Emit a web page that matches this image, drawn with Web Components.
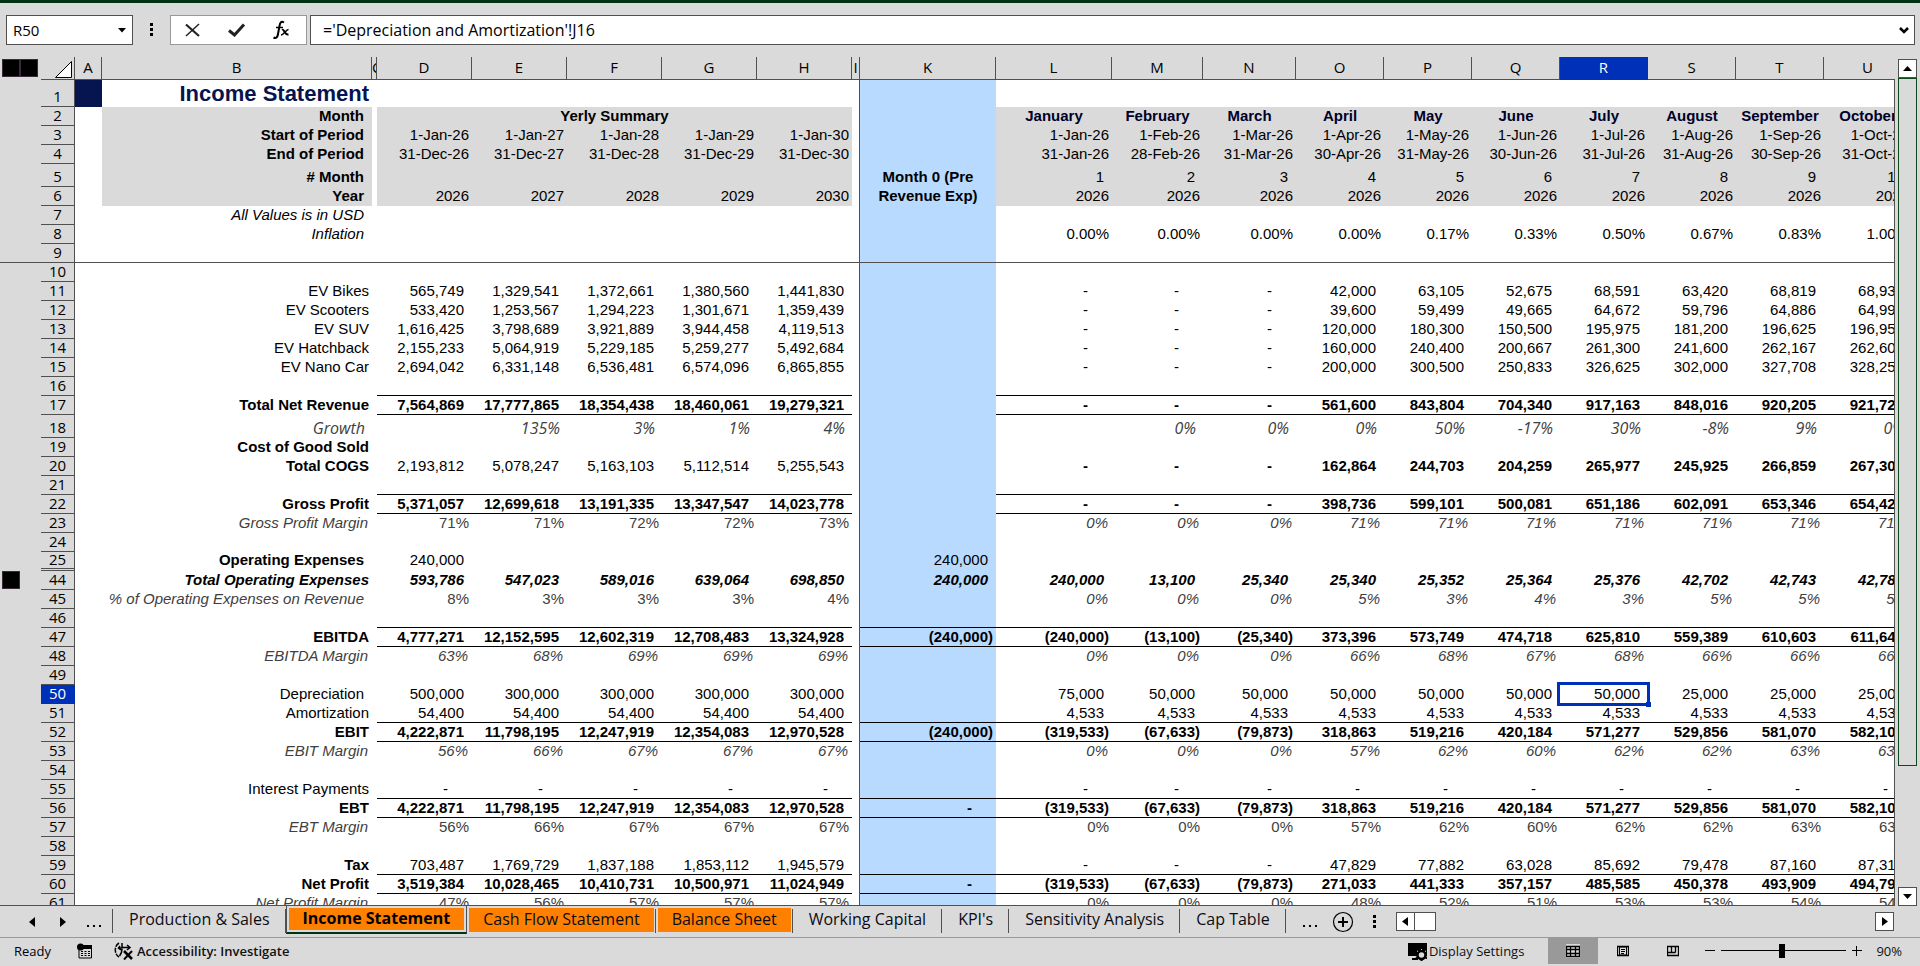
<!DOCTYPE html>
<html lang="en">
<head>
<meta charset="utf-8">
<title>Income Statement</title>
<style>
    body {
        margin: 0;
        background: #dadada;
    }
</style>
</head>
<body>
<workbook-app>
    <formula-bar slot="formula" cell="R50" formula="='Depreciation and Amortization'!J16"></formula-bar>
    <sheet-grid slot="sheet"></sheet-grid>
    <sheet-scrollbar slot="scroll"></sheet-scrollbar>
    <sheet-tabs slot="tabs">
        <sheet-tab>Production &amp; Sales</sheet-tab>
        <sheet-tab filled active>Income Statement</sheet-tab>
        <sheet-tab filled>Cash Flow Statement</sheet-tab>
        <sheet-tab filled>Balance Sheet</sheet-tab>
        <sheet-tab>Working Capital</sheet-tab>
        <sheet-tab>KPI's</sheet-tab>
        <sheet-tab>Sensitivity Analysis</sheet-tab>
        <sheet-tab>Cap Table</sheet-tab>
    </sheet-tabs>
    <status-bar slot="status" zoom="90">Ready</status-bar>
</workbook-app>

<script>
// Attach an open shadow root filled from a template
function attach(el, html) {
    const template = document.createElement('template');
    template.innerHTML = html;
    el.attachShadow({ mode: 'open' });
    el.shadowRoot.appendChild(template.content.cloneNode(true));
}

class WorkbookApp extends HTMLElement {
    constructor() {
        super();
        attach(this, `
            <style>
                :host {
                    display: grid;
                    grid-template-columns: minmax(0, 1fr) auto;
                    grid-template-rows: auto minmax(0, 1fr) auto auto;
                    height: 100vh;
                    box-sizing: border-box;
                    border-top: 3px solid #003311;
                    background: #dadada;
                    color: #000;
                    font-family: "Open Sans", "Noto Sans", sans-serif;
                    font-size: 15px;
                    overflow: hidden;
                    --line: #505050;
                    --accent: #0030b8;
                }
                .wide {
                    grid-column: 1 / -1;
                    min-width: 0;
                }
            </style>
            <div class="wide"><slot name="formula"></slot></div>
            <slot name="sheet"></slot>
            <slot name="scroll"></slot>
            <div class="wide"><slot name="tabs"></slot></div>
            <div class="wide"><slot name="status"></slot></div>
        `);
    }
}

class FormulaBar extends HTMLElement {
    constructor() {
        super();
        attach(this, `
            <style>
                :host {
                    display: flex;
                    padding: 12px 5px 12px 6px;
                }
                .box {
                    display: flex;
                    box-sizing: border-box;
                    height: 30px;
                    background: #fff;
                    border: 1px solid var(--line);
                }
                input {
                    flex: 1;
                    min-width: 0;
                    border: 0;
                    padding: 0;
                    background: none;
                    color: #000;
                    font: inherit;
                    outline: none;
                }
                button {
                    display: grid;
                    place-items: center;
                    border: 0;
                    padding: 0;
                    background: none;
                }
                .name {
                    width: 127px;
                    padding-left: 6px;
                }
                .name button {
                    width: 20px;
                }
                .dots {
                    width: 37px;
                    display: grid;
                    place-items: center;
                }
                .tools {
                    width: 137px;
                    border-color: #999;
                    justify-content: space-around;
                    padding: 0 3px 0 0;
                }
                .tools button {
                    width: 44px;
                }
                .formula {
                    flex: 1;
                    margin-left: 3px;
                    padding-left: 12px;
                    font-size: 16px;
                }
                .formula button {
                    width: 20px;
                }
            </style>
            <div class="box name">
                <input id="cell" aria-label="Name Box">
                <button aria-label="Open Name Box"><svg width="8" height="5"><path d="M0 0h8L4 4.500z"/></svg></button>
            </div>
            <div class="dots"><svg width="3" height="14"><path d="M0 0h3v3H0zM0 5h3v3H0zM0 10h3v3H0z"/></svg></div>
            <div class="box tools">
                <button aria-label="Cancel">
                    <svg width="16" height="14" fill="none" stroke="#222"><path d="M1 1.500L14 13" stroke-width="2.200"/><path d="M14 1L1 13" stroke-width="1.500"/></svg>
                </button>
                <button aria-label="Enter">
                    <svg width="18" height="14" fill="none" stroke="#222" stroke-width="3"><path d="M1 7.500L6.500 12L16 1.500"/></svg>
                </button>
                <button aria-label="Insert Function">
                    <svg width="18" height="20" fill="none" stroke="#000"><path d="M12 2.500C9 0.500 8 3 7.500 6L6 14C5.500 17.500 4 18.800 1.500 17.500" stroke-width="2"/><path d="M4 7.500h7" stroke-width="1.500"/><path d="M10 10C12.500 8.500 12.500 15.500 16.500 14.500" stroke-width="2"/><path d="M16.500 9.500C14 9.500 12 15 9 15" stroke-width="1.500"/></svg>
                </button>
            </div>
            <div class="box formula">
                <input id="formula" aria-label="Formula Bar">
                <button aria-label="Expand Formula Bar"><svg width="10" height="7" fill="none" stroke="#000" stroke-width="2.500"><path d="M1 1L5 5L9 1"/></svg></button>
            </div>
        `);
    }

    connectedCallback() {
        this.shadowRoot.querySelector('#cell').value = this.getAttribute('cell');
        this.shadowRoot.querySelector('#formula').value = this.getAttribute('formula');
    }
}

const COLUMNS = [
    ['A', 27], ['B', 270], ['C', 5],
    ['D', 95], ['E', 95], ['F', 95], ['G', 95], ['H', 95], ['I', 8],
    ['K', 136], ['L', 116], ['M', 91], ['N', 93],
    ['O', 88], ['P', 88], ['Q', 88], ['R', 88], ['S', 88], ['T', 88], ['U', 88]
];
const YEAR_COLUMNS = ['D', 'E', 'F', 'G', 'H'];
const MONTH_COLUMNS = ['L', 'M', 'N', 'O', 'P', 'Q', 'R', 'S', 'T', 'U'];

// n: row number, label: column B, l: label class, y: years, m: months, k: column K
// yc/mc/kc: classes, line: first monthly column that the bottom rule covers
const ROWS = [
    { n: 1, label: 'Income Statement', l: 'title', size: 'first' },
    { n: 2, label: 'Month', l: 'b in', head: 1, m: 'January February March April May June July August September October', mc: 'b month' },
    { n: 3, label: 'Start of Period', l: 'b in', head: 1, y: '1-Jan-26 1-Jan-27 1-Jan-28 1-Jan-29 1-Jan-30',
      m: '1-Jan-26 1-Feb-26 1-Mar-26 1-Apr-26 1-May-26 1-Jun-26 1-Jul-26 1-Aug-26 1-Sep-26 1-Oct-26' },
    { n: 4, label: 'End of Period', l: 'b in', head: 1, y: '31-Dec-26 31-Dec-27 31-Dec-28 31-Dec-29 31-Dec-30',
      m: '31-Jan-26 28-Feb-26 31-Mar-26 30-Apr-26 31-May-26 30-Jun-26 31-Jul-26 31-Aug-26 30-Sep-26 31-Oct-26' },
    { n: 5, label: '# Month', l: 'b in', head: 1, size: 'tall', m: '1 2 3 4 5 6 7 8 9 10', mc: 'in' },
    { n: 6, label: 'Year', l: 'b in', head: 1, y: '2026 2027 2028 2029 2030', m: '2026 2026 2026 2026 2026 2026 2026 2026 2026 2026' },
    { n: 7, label: 'All Values is in USD', l: 'i in' },
    { n: 8, label: 'Inflation', l: 'i in', m: '0.00% 0.00% 0.00% 0.00% 0.17% 0.33% 0.50% 0.67% 0.83% 1.00%' },
    { n: 9, freeze: 1 },
    { n: 10 },
    { n: 11, label: 'EV Bikes', y: '565,749 1,329,541 1,372,661 1,380,560 1,441,830', yc: 'in',
      m: '- - - 42,000 63,105 52,675 68,591 63,420 68,819 68,934', mc: 'in' },
    { n: 12, label: 'EV Scooters', y: '533,420 1,253,567 1,294,223 1,301,671 1,359,439', yc: 'in',
      m: '- - - 39,600 59,499 49,665 64,672 59,796 64,886 64,995', mc: 'in' },
    { n: 13, label: 'EV SUV', y: '1,616,425 3,798,689 3,921,889 3,944,458 4,119,513', yc: 'in',
      m: '- - - 120,000 180,300 150,500 195,975 181,200 196,625 196,953', mc: 'in' },
    { n: 14, label: 'EV Hatchback', y: '2,155,233 5,064,919 5,229,185 5,259,277 5,492,684', yc: 'in',
      m: '- - - 160,000 240,400 200,667 261,300 241,600 262,167 262,604', mc: 'in' },
    { n: 15, label: 'EV Nano Car', y: '2,694,042 6,331,148 6,536,481 6,574,096 6,865,855', yc: 'in',
      m: '- - - 200,000 300,500 250,833 326,625 302,000 327,708 328,255', mc: 'in' },
    { n: 16, line: 'L' },
    { n: 17, label: 'Total Net Revenue', l: 'b', y: '7,564,869 17,777,865 18,354,438 18,460,061 19,279,321', yc: 'b in',
      m: '- - - 561,600 843,804 704,340 917,163 848,016 920,205 921,725', mc: 'b in', line: 'L' },
    { n: 18, label: 'Growth', l: 'growth', size: 'tall', y: '_ 135% 3% 1% 4%', yc: 'growth', m: '_ 0% 0% 0% 50% -17% 30% -8% 9% 0%', mc: 'growth' },
    { n: 19, label: 'Cost of Good Sold', l: 'b' },
    { n: 20, label: 'Total COGS', l: 'b', y: '2,193,812 5,078,247 5,163,103 5,112,514 5,255,543', yc: 'in',
      m: '- - - 162,864 244,703 204,259 265,977 245,925 266,859 267,300', mc: 'b in' },
    { n: 21, line: 'L' },
    { n: 22, label: 'Gross Profit', l: 'b', y: '5,371,057 12,699,618 13,191,335 13,347,547 14,023,778', yc: 'b in',
      m: '- - - 398,736 599,101 500,081 651,186 602,091 653,346 654,425', mc: 'b in', line: 'L' },
    { n: 23, label: 'Gross Profit Margin', l: 'i dim', y: '71% 71% 72% 72% 73%', yc: 'dim',
      m: '0% 0% 0% 71% 71% 71% 71% 71% 71% 71%', mc: 'i dim' },
    { n: 24 },
    { n: 25, label: 'Operating Expenses', l: 'b in', y: '240,000', yc: 'in', k: '240,000', kc: 'in', size: 'short' },
    { gap: 1 },
    { n: 44, label: 'Total Operating Expenses', l: 'b i', y: '593,786 547,023 589,016 639,064 698,850', yc: 'b i in', k: '240,000', kc: 'b i in',
      m: '240,000 13,100 25,340 25,340 25,352 25,364 25,376 42,702 42,743 42,784', mc: 'b i in', outline: 1 },
    { n: 45, label: '% of Operating Expenses on Revenue', l: 'i dim in', y: '8% 3% 3% 3% 4%', yc: 'dim',
      m: '0% 0% 0% 5% 3% 4% 3% 5% 5% 5%', mc: 'i dim' },
    { n: 46, line: 'K' },
    { n: 47, label: 'EBITDA', l: 'b', y: '4,777,271 12,152,595 12,602,319 12,708,483 13,324,928', yc: 'b in', k: '(240,000)', kc: 'b in',
      m: '(240,000) (13,100) (25,340) 373,396 573,749 474,718 625,810 559,389 610,603 611,641', mc: 'b in', line: 'K' },
    { n: 48, label: 'EBITDA Margin', l: 'i dim', y: '63% 68% 69% 69% 69%', yc: 'i dim',
      m: '0% 0% 0% 66% 68% 67% 68% 66% 66% 66%', mc: 'i dim' },
    { n: 49 },
    { n: 50, label: 'Depreciation', l: 'in', y: '500,000 300,000 300,000 300,000 300,000', yc: 'in',
      m: '75,000 50,000 50,000 50,000 50,000 50,000 50,000 25,000 25,000 25,000', mc: 'in' },
    { n: 51, label: 'Amortization', y: '54,400 54,400 54,400 54,400 54,400', yc: 'in',
      m: '4,533 4,533 4,533 4,533 4,533 4,533 4,533 4,533 4,533 4,533', mc: 'in', line: 'K' },
    { n: 52, label: 'EBIT', l: 'b', y: '4,222,871 11,798,195 12,247,919 12,354,083 12,970,528', yc: 'b in', k: '(240,000)', kc: 'b in',
      m: '(319,533) (67,633) (79,873) 318,863 519,216 420,184 571,277 529,856 581,070 582,108', mc: 'b in', line: 'K' },
    { n: 53, label: 'EBIT Margin', l: 'i dim', y: '56% 66% 67% 67% 67%', yc: 'i dim',
      m: '0% 0% 0% 57% 62% 60% 62% 62% 63% 63%', mc: 'i dim' },
    { n: 54 },
    { n: 55, label: 'Interest Payments', y: '- - - - -', yc: 'in', m: '- - - - - - - - - -', mc: 'in', line: 'K' },
    { n: 56, label: 'EBT', l: 'b', y: '4,222,871 11,798,195 12,247,919 12,354,083 12,970,528', yc: 'b in', k: '-', kc: 'b in',
      m: '(319,533) (67,633) (79,873) 318,863 519,216 420,184 571,277 529,856 581,070 582,108', mc: 'b in', line: 'K' },
    { n: 57, label: 'EBT Margin', l: 'i dim', y: '56% 66% 67% 67% 67%', yc: 'dim',
      m: '0% 0% 0% 57% 62% 60% 62% 62% 63% 63%', mc: 'dim' },
    { n: 58 },
    { n: 59, label: 'Tax', l: 'b', y: '703,487 1,769,729 1,837,188 1,853,112 1,945,579', yc: 'in',
      m: '- - - 47,829 77,882 63,028 85,692 79,478 87,160 87,316', mc: 'in', line: 'K' },
    { n: 60, label: 'Net Profit', l: 'b', y: '3,519,384 10,028,465 10,410,731 10,500,971 11,024,949', yc: 'b in', k: '-', kc: 'b in',
      m: '(319,533) (67,633) (79,873) 271,033 441,333 357,157 485,585 450,378 493,909 494,792', mc: 'b in', line: 'K' },
    { n: 61, label: 'Net Profit Margin', l: 'i dim', y: '47% 56% 57% 57% 57%', yc: 'dim',
      m: '0% 0% 0% 48% 52% 51% 53% 53% 54% 54%', mc: 'dim' }
];

class SheetGrid extends HTMLElement {
    constructor() {
        super();
        attach(this, `
            <style>
                :host {
                    display: block;
                    overflow: hidden;
                    background: #fff;
                    border-bottom: 1px solid var(--line);
                }
                table {
                    table-layout: fixed;
                    width: 0;
                    border-collapse: separate;
                    border-spacing: 0;
                    font: 15px/18px "Liberation Sans", Arial, sans-serif;
                }
                th, td {
                    box-sizing: border-box;
                    height: 19px;
                    padding: 0 3px 0 0;
                    border-bottom: 1px solid transparent;
                    text-align: right;
                    vertical-align: bottom;
                    white-space: nowrap;
                    font-weight: normal;
                }
                .first > * { height: 27px; }
                .tall > * { height: 23px; }
                .short > * { height: 17px; line-height: 16px; }
                .gap > * { height: 2px; line-height: 1px; }

                /* column letters */
                thead th {
                    height: 23px;
                    padding: 0;
                    overflow: hidden;
                    background: #dadada;
                    border-right: 1px solid var(--line);
                    border-bottom-color: var(--line);
                    font: 15px/20px "Open Sans", "Noto Sans", sans-serif;
                    text-align: center;
                    vertical-align: top;
                }
                thead th.gutter {
                    border-color: #dadada;
                }
                th.sel {
                    background: var(--accent);
                    color: #fff;
                    border-color: var(--accent);
                }
                thead button {
                    display: block;
                    float: right;
                    margin: 4px 2px 0 0;
                    border: 0;
                    padding: 0;
                    background: none;
                    line-height: 0;
                }
                thead .outline {
                    padding-top: 2px;
                }

                /* outline gutter and row numbers */
                .gutter {
                    background: #dadada;
                    padding: 0;
                }
                .outline {
                    display: flex;
                    padding-left: 2px;
                }
                .outline button {
                    box-sizing: border-box;
                    width: 18px;
                    height: 18px;
                    margin: 0;
                    border: 1px solid #3a2a3c;
                    padding: 0;
                    background: #000;
                }
                .num {
                    padding: 0 0 1px;
                    background: #dadada;
                    border-right: 1px solid var(--line);
                    border-bottom-color: var(--line);
                    font-family: "Open Sans", "Noto Sans", sans-serif;
                    line-height: 17px;
                    text-align: center;
                }
                .short .num { line-height: 15px; }
                .gap .num { padding: 0; line-height: 1px; }

                .b { font-weight: bold; }
                .i { font-style: italic; }
                .dim { color: #404040; }
                .dim.i { padding-right: 4px; }
                .in, .dim.in { padding-right: 8px; }
                .neg { padding-right: 3px; }
                .dash { padding-right: 24px; }
                .growth {
                    padding-right: 7px;
                    color: #404040;
                    font-family: "Open Sans", "Noto Sans", sans-serif;
                    font-size: 16px;
                    font-style: italic;
                }
                .title {
                    color: #06144f;
                    font-size: 22px;
                    line-height: 24px;
                    font-weight: bold;
                }
                .navy { background: #06144f; }
                .head {
                    background: #dadada;
                }
                .mid {
                    padding: 0;
                    text-align: center;
                }
                .month {
                    padding: 0;
                    color: #000028;
                    text-align: center;
                }
                .k {
                    background: #b8daff;
                }
                .k.mid {
                    line-height: 19px;
                }
                .split {
                    padding: 0;
                    border-bottom-width: 0;
                    border-right: 1px solid var(--line);
                }
                .rule { border-bottom-color: #000; }
                .freeze > * {
                    border-bottom-color: var(--line);
                    border-bottom-width: 1px;
                }

                .active {
                    position: relative;
                }
                .active::before {
                    content: "";
                    position: absolute;
                    inset: -3px -2px -3px -3px;
                    border: 3px solid var(--accent);
                }
                .active::after {
                    content: "";
                    position: absolute;
                    right: -3px;
                    bottom: -4px;
                    width: 5px;
                    height: 5px;
                    background: var(--accent);
                }
            </style>
            <table>
                <colgroup></colgroup>
                <thead><tr></tr></thead>
                <tbody></tbody>
            </table>
        `);
    }

    connectedCallback() {
        const root = this.shadowRoot;
        const widths = [41, 34].concat(COLUMNS.map(c => c[1]));
        root.querySelector('colgroup').innerHTML = widths.map(w => `<col style="width: ${w}px">`).join('');
        root.querySelector('thead tr').innerHTML = `
            <th class="gutter"><div class="outline"><button aria-label="Outline level 1"></button><button aria-label="Outline level 2"></button></div></th>
            <th><button aria-label="Select all"><svg width="17" height="17"><path d="M16.500 0.500V16.500H0.500z" fill="#fff" stroke="#000"/></svg></button></th>
            ${COLUMNS.map(c => `<th scope="col" class="${c[0] === 'R' ? 'sel' : ''}">${c[0]}</th>`).join('')}
        `;
        root.querySelector('tbody').innerHTML = ROWS.map(r => this.row(r)).join('');
    }

    row(r) {
        if (r.gap) {
            return `<tr class="gap"><td class="gutter"></td><td class="num"></td>${COLUMNS.map(c => {
                return `<td class="${c[0] === 'K' ? 'k' : c[0] === 'I' ? 'split' : ''}"></td>`;
            }).join('')}</tr>`;
        }
        const years = (r.y || '').split(' ');
        const months = (r.m || '').split(' ');
        const outline = r.outline ? '<div class="outline"><button aria-label="Expand rows"></button></div>' : '';
        let html = `<td class="gutter">${outline}</td>`;
        html += `<th scope="row" class="num ${r.n === 50 ? 'sel' : ''}">${r.n}</th>`;
        for (const [name] of COLUMNS) {
            const y = YEAR_COLUMNS.indexOf(name);
            const m = MONTH_COLUMNS.indexOf(name);
            if (name === 'A') {
                html += this.cell('', r.n === 1 ? 'navy' : '');
            } else if (name === 'B') {
                html += this.cell(r.label, r.l, r.head);
            } else if (name === 'C') {
                html += this.cell('');
            } else if (name === 'I') {
                html += this.cell('', 'split');
            } else if (name === 'K') {
                // the note spans rows 5 and 6
                if (r.n === 5) html += '<td class="k b mid" rowspan="2">Month 0 (Pre<br>Revenue Exp)</td>';
                else if (r.n !== 6) html += this.cell(r.k, 'k ' + (r.kc || ''), false, r.line === 'K');
            } else if (y >= 0) {
                if (r.n === 2 && y === 0) html += '<td class="b mid head" colspan="5">Yerly Summary</td>';
                else if (r.n !== 2) html += this.cell(years[y], r.yc, r.head, r.line);
            } else {
                const active = r.n === 50 && name === 'R' ? ' active' : '';
                html += this.cell(months[m], (r.mc || '') + active, r.head, r.line);
            }
        }
        return `<tr class="${r.size || ''} ${r.freeze ? 'freeze' : ''}">${html}</tr>`;
    }

    cell(text, cls, head, rule) {
        const classes = [cls || ''];
        if (head) classes.push('head');
        if (rule) classes.push('rule');
        if (text === '-') classes.push('dash');
        if (text && text[0] === '(') classes.push('neg');
        return `<td class="${classes.join(' ')}">${!text || text === '_' ? '' : text}</td>`;
    }
}

class SheetScrollbar extends HTMLElement {
    constructor() {
        super();
        attach(this, `
            <style>
                :host {
                    display: flex;
                    flex-direction: column;
                    box-sizing: border-box;
                    width: 26px;
                    padding: 2px 3px 0 4px;
                    background: linear-gradient(var(--line), var(--line)) 0 22px / 1px 100% no-repeat;
                }
                button {
                    display: grid;
                    place-items: center;
                    box-sizing: border-box;
                    height: 19px;
                    border: 1px solid var(--line);
                    padding: 0;
                    background: #fff;
                }
                .track {
                    flex: 1;
                }
                .thumb {
                    box-sizing: border-box;
                    height: 85%;
                    border: 1px solid #0f4a1e;
                }
            </style>
            <button aria-label="Scroll up"><svg width="9" height="5"><path d="M0 5h9L4.500 0z"/></svg></button>
            <div class="track"><div class="thumb"></div></div>
            <button aria-label="Scroll down"><svg width="9" height="5"><path d="M0 0h9L4.500 5z"/></svg></button>
        `);
    }
}

class SheetTab extends HTMLElement {
    constructor() {
        super();
        attach(this, `
            <style>
                :host {
                    display: flex;
                    box-sizing: border-box;
                    height: 28px;
                    padding: 2px;
                    position: relative;
                }
                :host::after {
                    content: "";
                    position: absolute;
                    right: 0;
                    top: 3px;
                    bottom: 1px;
                    width: 1px;
                    background: var(--line);
                }
                button {
                    border: 0;
                    padding: 0 14px;
                    background: none;
                    color: #0c0c14;
                    font: inherit;
                    font-size: 16px;
                    line-height: 20px;
                    padding-bottom: 2px;
                    white-space: nowrap;
                }
                :host([filled]) button {
                    background: #ff8000;
                }
                :host([active]) {
                    border: 1px solid var(--line);
                    border-top: 0;
                    border-bottom: 2px solid #003311;
                }
                :host([active])::after {
                    display: none;
                }
                :host([active]) button {
                    font-weight: bold;
                    color: #000;
                }
            </style>
            <button><slot></slot></button>
        `);
    }
}

class SheetTabs extends HTMLElement {
    constructor() {
        super();
        attach(this, `
            <style>
                :host {
                    display: flex;
                    height: 31px;
                }
                .nav {
                    display: flex;
                    align-items: center;
                    box-sizing: border-box;
                    width: 112px;
                    padding: 0 9px 0 23px;
                    justify-content: space-between;
                }
                button {
                    display: grid;
                    place-items: center;
                    border: 0;
                    padding: 0;
                    background: none;
                }
                .nav button {
                    width: 18px;
                    height: 24px;
                }
                .first {
                    width: 1px;
                    height: 24px;
                    margin-top: 3px;
                    background: var(--line);
                }
                .after {
                    display: flex;
                    align-items: center;
                    gap: 15px;
                    padding: 0 17px 0 17px;
                }
                .bar {
                    flex: 1;
                    display: flex;
                    align-items: center;
                    margin-right: 26px;
                }
                .bar button, .thumb {
                    box-sizing: border-box;
                    width: 19px;
                    height: 19px;
                    border: 1px solid var(--line);
                    background: #fff;
                }
                .thumb {
                    width: 22px;
                    margin: 0 auto 0 -1px;
                }
            </style>
            <div class="nav">
                <button aria-label="Previous sheet"><svg width="6" height="10"><path d="M6 0v10L0 5z"/></svg></button>
                <button aria-label="Next sheet"><svg width="6" height="10"><path d="M0 0v10l6-5z"/></svg></button>
                <button aria-label="More sheets"><svg width="14" height="12"><path d="M0 9h2v2H0zM6 9h2v2H6zM12 9h2v2h-2z"/></svg></button>
            </div>
            <div class="first"></div>
            <slot></slot>
            <div class="after">
                <button aria-label="More sheets"><svg width="14" height="12"><path d="M0 9h2v2H0zM6 9h2v2H6zM12 9h2v2h-2z"/></svg></button>
                <button aria-label="New sheet"><svg width="22" height="22" fill="none" stroke="#000"><circle cx="11" cy="11" r="9.500" stroke-width="1.200"/><path d="M11 6v10M6 11h10" stroke-width="2"/></svg></button>
                <svg width="10" height="14"><path d="M4 0h3v3H4zM4 5h3v3H4zM4 10h3v3H4z"/></svg>
            </div>
            <div class="bar">
                <button aria-label="Scroll left"><svg width="6" height="9"><path d="M6 0v9L0 4.500z"/></svg></button>
                <div class="thumb"></div>
                <button aria-label="Scroll right"><svg width="6" height="9"><path d="M0 0v9l6-4.500z"/></svg></button>
            </div>
        `);
    }
}

class StatusBar extends HTMLElement {
    constructor() {
        super();
        attach(this, `
            <style>
                :host {
                    display: flex;
                    align-items: center;
                    box-sizing: border-box;
                    height: 29px;
                    border-top: 1px solid #999;
                    padding: 0 18px 2px 14px;
                    font-size: 13px;
                }
                button {
                    display: flex;
                    align-items: center;
                    justify-content: center;
                    border: 0;
                    padding: 0;
                    background: none;
                    color: #111;
                    font: inherit;
                    white-space: nowrap;
                }
                .macro {
                    margin: 0 21px 0 26px;
                }
                .access {
                    gap: 3px;
                    font-weight: 600;
                }
                .display {
                    gap: 2px;
                    margin: 0 24px 0 auto;
                }
                .view {
                    width: 50px;
                    height: 26px;
                }
                .view.on {
                    background: #999;
                }
                .zoom {
                    display: flex;
                    align-items: center;
                    gap: 6px;
                    margin-left: 7px;
                }
                input {
                    -webkit-appearance: none;
                    appearance: none;
                    width: 125px;
                    height: 16px;
                    margin: 0;
                    background:
                        linear-gradient(#000, #000) 62px 4px / 1px 8px no-repeat,
                        linear-gradient(#000, #000) 0 7px / 100% 1px no-repeat;
                }
                input::-webkit-slider-thumb {
                    -webkit-appearance: none;
                    width: 6px;
                    height: 14px;
                    background: #000;
                }
                .level {
                    margin-left: 8px;
                }
            </style>
            <slot></slot>
            <button class="macro" aria-label="Record Macro">
                <svg width="16" height="16"><path d="M2 4.500h12.500v10.500h-12.500z" fill="#dadada" stroke="#000"/><path d="M6 2h9v4H2V5z"/><circle cx="3.500" cy="4" r="3.500"/><path d="M4 8.500h2M7.500 8.500h2M11 8.500h2M4 10.500h2M7.500 10.500h2M11 10.500h2M4 12.500h2M7.500 12.500h2M11 12.500h2" stroke="#000"/></svg>
            </button>
            <button class="access">
                <svg width="20" height="18" fill="none" stroke="#000"><path d="M5 1C0 4 0 12 5 15" stroke-width="1.500" stroke-dasharray="5 1"/><path d="M8 1v5H5M6 4L4.500 6L7 8M8 5.500h8M13 3l3 2.500L13 8M8 7c0 4-1 5-2.500 7" stroke-width="1.500"/><path d="M10 9l8 8" stroke-width="2.500"/><path d="M18 9l-8 8.500" stroke-width="2"/></svg>
                <span>Accessibility: Investigate</span>
            </button>
            <button class="display">
                <svg width="19" height="19"><path d="M0 1h19v13H0zM4 16h6v2H4z"/><circle cx="13.500" cy="13" r="4" fill="#dadada" stroke="#000" stroke-width="2.500"/><path d="M13.500 7v3M13.500 16v3M8 10l2.500 1.500M16.500 14.500L19 16.500M8 16.500l2.500-2M16.500 11.500L19 9.500" stroke="#000" stroke-width="2"/><path d="M9 9l1 .5M13 7.500h1M17 9.500l1-.5" stroke="#dadada"/></svg>
                <span>Display Settings</span>
            </button>
            <button class="view on" aria-label="Normal">
                <svg width="14" height="14"><path d="M0 0h14v14H0z" fill="#dadada"/><path d="M0.500 2.500h13v10h-13zM0.500 5.500h13M0.500 9.500h13M4.500 2.500v10M9.500 2.500v10" fill="none" stroke="#000" stroke-width="1.300"/></svg>
            </button>
            <button class="view" aria-label="Page Layout">
                <svg width="12" height="12" fill="none" stroke="#000"><path d="M0.500 1.500h11v9h-11z" stroke-width="1.300"/><path d="M2.500 2v8h7v-8zM4 4.500h4M4 6.500h4M4 8.500h3"/></svg>
            </button>
            <button class="view" aria-label="Page Break Preview">
                <svg width="12" height="12" fill="none" stroke="#000" stroke-width="1.300"><path d="M0.500 1.500h11v9h-11zM4.500 1.500v6M8.500 1.500v6M1 7.500h7.500"/></svg>
            </button>
            <div class="zoom">
                <button aria-label="Zoom out"><svg width="10" height="10"><path d="M0 4h10v1H0z"/></svg></button>
                <input type="range" min="10" max="174" aria-label="Zoom">
                <button aria-label="Zoom in"><svg width="10" height="10"><path d="M0 4h10v1H0zM4 0h1v10H4z"/></svg></button>
                <button class="level"></button>
            </div>
        `);
    }

    connectedCallback() {
        const zoom = this.getAttribute('zoom');
        this.shadowRoot.querySelector('input').value = zoom;
        this.shadowRoot.querySelector('.level').textContent = zoom + '%';
    }
}

customElements.define('workbook-app', WorkbookApp);
customElements.define('formula-bar', FormulaBar);
customElements.define('sheet-grid', SheetGrid);
customElements.define('sheet-scrollbar', SheetScrollbar);
customElements.define('sheet-tab', SheetTab);
customElements.define('sheet-tabs', SheetTabs);
customElements.define('status-bar', StatusBar);
</script>
</body>
</html>
